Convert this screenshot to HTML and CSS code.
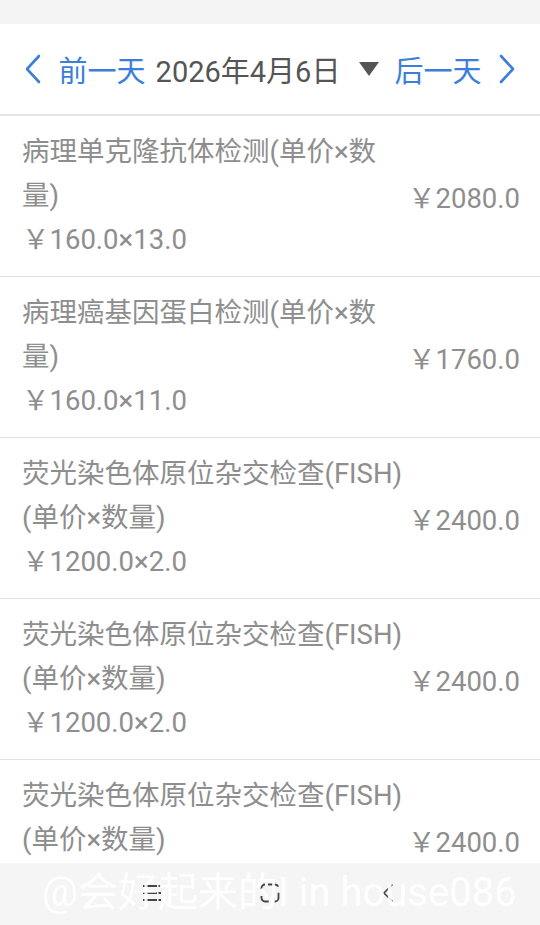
FILE: index.html
```html
<!DOCTYPE html>
<html lang="zh-CN">
<head>
<meta charset="utf-8">
<link rel="stylesheet" href="styles.css">
</head>
<body>
<div class="topband"></div>
<header class="datebar">
  <span class="nav prev">
    <svg class="chev" viewBox="0 0 18 30" width="18" height="30"><path d="M15 2 L3 15 L15 28" fill="none" stroke="#3b7fdc" stroke-width="2.6" stroke-linecap="round" stroke-linejoin="round"/></svg>
    <span class="navtext">前一天</span>
  </span>
  <span class="date">2026年4月6日</span>
  <svg class="tri" viewBox="0 0 20 14" width="20" height="14"><path d="M0 0 H20 L10 14 Z" fill="#555"/></svg>
  <span class="nav next">
    <span class="navtext">后一天</span>
    <svg class="chev" viewBox="0 0 18 30" width="18" height="30"><path d="M3 2 L15 15 L3 28" fill="none" stroke="#3b7fdc" stroke-width="2.6" stroke-linecap="round" stroke-linejoin="round"/></svg>
  </span>
</header>
<main class="list">
  <div class="item">
    <div class="info">
      <div class="name">病理单克隆抗体检测(单价×数量)</div>
      <div class="unit">￥160.0×13.0</div>
    </div>
    <div class="price">￥2080.0</div>
  </div>
  <div class="item">
    <div class="info">
      <div class="name">病理癌基因蛋白检测(单价×数量)</div>
      <div class="unit">￥160.0×11.0</div>
    </div>
    <div class="price">￥1760.0</div>
  </div>
  <div class="item">
    <div class="info">
      <div class="name">荧光染色体原位杂交检查(FISH)(单价×数量)</div>
      <div class="unit">￥1200.0×2.0</div>
    </div>
    <div class="price">￥2400.0</div>
  </div>
  <div class="item">
    <div class="info">
      <div class="name">荧光染色体原位杂交检查(FISH)(单价×数量)</div>
      <div class="unit">￥1200.0×2.0</div>
    </div>
    <div class="price">￥2400.0</div>
  </div>
  <div class="item">
    <div class="info">
      <div class="name">荧光染色体原位杂交检查(FISH)(单价×数量)</div>
      <div class="unit">￥1200.0×2.0</div>
    </div>
    <div class="price">￥2400.0</div>
  </div>
</main>
<footer class="sysnav">
  <div class="watermark">@会好起来的I in house086</div>
  <svg class="navicon" viewBox="0 0 20 20" width="20" height="20"><path d="M1 3 H19 M1 10 H19 M1 17 H19" stroke="#444" stroke-width="1.8" stroke-dasharray="14 1.5" fill="none"/></svg>
  <svg class="navicon" viewBox="0 0 20 20" width="20" height="20"><rect x="1.5" y="1.5" width="17" height="17" rx="3.5" fill="none" stroke="#444" stroke-width="1.8" stroke-dasharray="11 6" stroke-dashoffset="-3"/></svg>
  <svg class="navicon" viewBox="0 0 20 20" width="20" height="20"><path d="M14 2 L6 10 L14 18" fill="none" stroke="#444" stroke-width="1.6" stroke-linecap="round"/></svg>
</footer>
</body>
</html>
```
FILE: styles.css
```css
html, body {
  margin: 0;
  padding: 0;
  background: #fff;
  font-family: Roboto, "Noto Sans CJK SC", sans-serif;
}
.topband {
  height: 24px;
  background: #f4f4f4;
}
.datebar {
  height: 90px;
  border-bottom: 2px solid #e6e6e6;
  display: flex;
  align-items: center;
  justify-content: center;
  font-size: 29px;
}
.nav {
  display: flex;
  align-items: center;
  gap: 17px;
  color: #3b7fdc;
}
.chev { display: block; }
.date { color: #555; margin-left: 10px; }
.tri { margin: 0 15px 0 19px; }
.item {
  display: flex;
  align-items: center;
  justify-content: space-between;
  padding: 14px 22px;
  border-bottom: 1px solid #e2e2e2;
  color: #8e8e8e;
  font-size: 27.5px;
}
.info {
  width: 386px;
  flex-shrink: 0;
}
.name, .unit {
  line-height: 44px;
}
.price {
  white-space: nowrap;
}
.sysnav {
  position: fixed;
  left: 0;
  right: 0;
  bottom: 0;
  height: 62px;
  background: #f5f5f5;
  display: flex;
  justify-content: center;
  align-items: center;
  gap: 98px;
}
.navicon { position: relative; z-index: 1; margin-top: -2px; flex-shrink: 0; }
.watermark {
  position: absolute;
  left: 42px;
  top: -3px;
  font-size: 40px;
  color: rgba(255,255,255,0.9);
  white-space: nowrap;
  z-index: 2;
}
```
